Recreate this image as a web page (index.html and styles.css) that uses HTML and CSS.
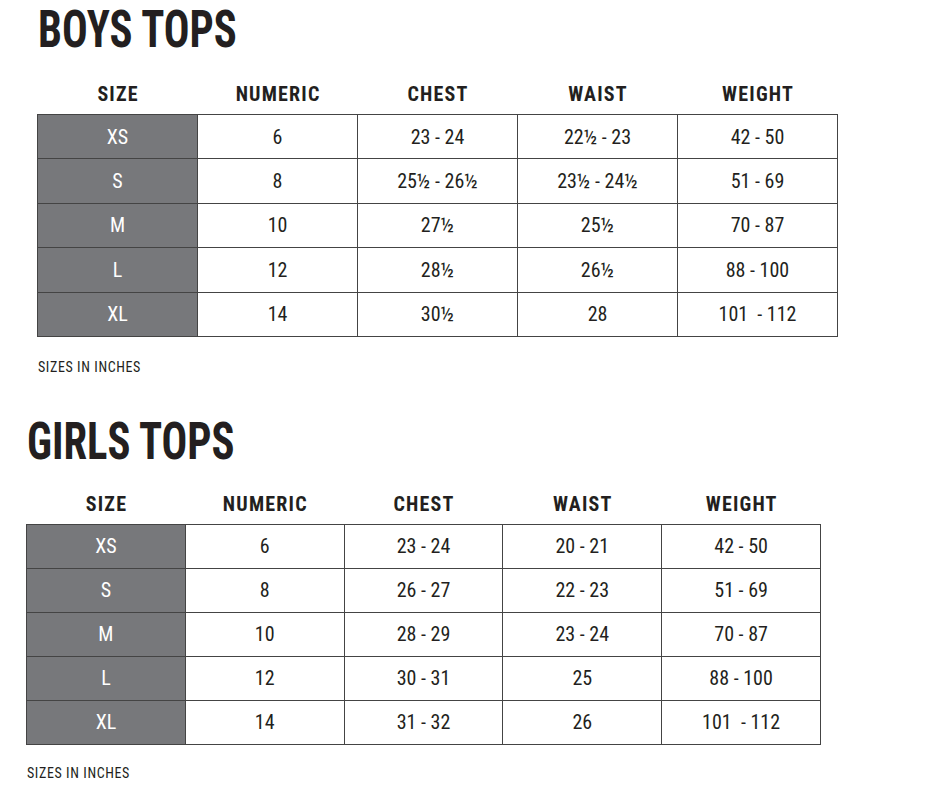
FILE: index.html
```html
<!DOCTYPE html>
<html lang="en">
<head>
<meta charset="utf-8">
<title>Size Chart</title>
<link rel="stylesheet" href="styles.css">
</head>
<body>
<section class="chart chart--boys">
  <h1 class="chart__title">BOYS TOPS</h1>
  <table class="chart__table">
    <thead>
      <tr><th>SIZE</th><th>NUMERIC</th><th>CHEST</th><th>WAIST</th><th>WEIGHT</th></tr>
    </thead>
    <tbody>
      <tr><td class="size">XS</td><td>6</td><td>23 - 24</td><td>22½ - 23</td><td>42 - 50</td></tr>
      <tr><td class="size">S</td><td>8</td><td>25½ - 26½</td><td>23½ - 24½</td><td>51 - 69</td></tr>
      <tr><td class="size">M</td><td>10</td><td>27½</td><td>25½</td><td>70 - 87</td></tr>
      <tr><td class="size">L</td><td>12</td><td>28½</td><td>26½</td><td>88 - 100</td></tr>
      <tr><td class="size">XL</td><td>14</td><td>30½</td><td>28</td><td>101 &nbsp;- 112</td></tr>
    </tbody>
  </table>
  <p class="chart__note">SIZES IN INCHES</p>
</section>
<section class="chart chart--girls">
  <h1 class="chart__title">GIRLS TOPS</h1>
  <table class="chart__table">
    <thead>
      <tr><th>SIZE</th><th>NUMERIC</th><th>CHEST</th><th>WAIST</th><th>WEIGHT</th></tr>
    </thead>
    <tbody>
      <tr><td class="size">XS</td><td>6</td><td>23 - 24</td><td>20 - 21</td><td>42 - 50</td></tr>
      <tr><td class="size">S</td><td>8</td><td>26 - 27</td><td>22 - 23</td><td>51 - 69</td></tr>
      <tr><td class="size">M</td><td>10</td><td>28 - 29</td><td>23 - 24</td><td>70 - 87</td></tr>
      <tr><td class="size">L</td><td>12</td><td>30 - 31</td><td>25</td><td>88 - 100</td></tr>
      <tr><td class="size">XL</td><td>14</td><td>31 - 32</td><td>26</td><td>101 &nbsp;- 112</td></tr>
    </tbody>
  </table>
  <p class="chart__note chart__note--last">SIZES IN INCHES</p>
</section>
</body>
</html>
```
FILE: styles.css
```css
html, body {
  margin: 0;
  padding: 0;
  background: #ffffff;
}

body {
  font-family: "Roboto Condensed", "Roboto", "Liberation Sans", sans-serif;
  font-stretch: condensed;
  color: #231f20;
}

.chart--boys {
  padding: 4px 0 0 37px;
}

.chart--girls {
  padding: 39px 0 0 26px;
}

.chart__title {
  margin: 0 0 0 1px;
  font-size: 52px;
  line-height: 52px;
  font-weight: 700;
  color: #231f20;
  transform: scaleX(0.82);
  transform-origin: left center;
}

.chart__table {
  border-collapse: collapse;
  table-layout: fixed;
}

.chart--boys .chart__table {
  margin-top: 18px;
}

.chart--girls .chart__table {
  margin-top: 15.6px;
}

.chart--boys .chart__table th,
.chart--boys .chart__table td {
  width: 159px;
}

.chart--girls .chart__table th,
.chart--girls .chart__table td {
  width: 157.8px;
}

.chart__table th {
  font-size: 20px;
  line-height: 20px;
  font-weight: 700;
  letter-spacing: 1.2px;
  text-indent: 1.2px;
  height: 40px;
  padding: 0;
  text-align: center;
  vertical-align: middle;
}

.chart__table td {
  font-size: 20px;
  line-height: 20px;
  font-weight: 400;
  padding: 0;
  text-align: center;
  vertical-align: middle;
  border: 1px solid #444444;
}

.chart--boys .chart__table td {
  height: 43.4px;
}

.chart--girls .chart__table td {
  height: 43px;
}

.chart__table td.size {
  background: #77787b;
  color: #ffffff;
}

.chart__note {
  margin: 20px 0 0 1px;
  font-size: 14px;
  line-height: 20px;
  letter-spacing: 0.6px;
}

.chart__note--last {
  margin-top: 18px;
}
```
